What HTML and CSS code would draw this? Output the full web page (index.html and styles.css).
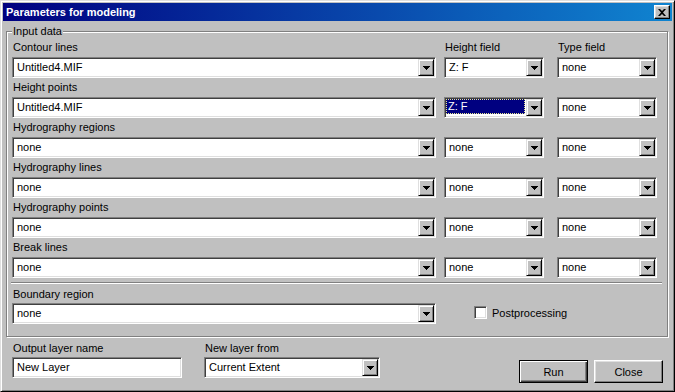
FILE: index.html
```html
<!DOCTYPE html>
<html lang="en">
<head>
    <meta charset="UTF-8">
    <title>Parameters for modeling</title>
    <link rel="stylesheet" href="styles.css">
</head>
<body>
    <div class="window">
        <div class="titlebar">
            <span class="title">Parameters for modeling</span>
            <span class="close-btn">
                <svg width="8" height="7" viewBox="0 0 8 7"><path d="M0 0h2l2 2 2-2h2L5 3.5 8 7H6L4 5 2 7H0l3-3.5z" fill="#000"/></svg>
            </span>
        </div>

        <fieldset class="group">
            <legend>Input data</legend>

            <div class="row">
                <div class="field f-main">
                    <div class="lbl">Contour lines</div>
                    <div class="combo"><span class="value">Untitled4.MIF</span><span class="drop"><svg width="7" height="4" viewBox="0 0 7 4"><path d="M0 0h7v1H0zM1 1h5v1H1zM2 2h3v1H2zM3 3h1v1H3z"/></svg></span></div>
                </div>
                <div class="field f-height">
                    <div class="lbl">Height field</div>
                    <div class="combo"><span class="value">Z: F</span><span class="drop"><svg width="7" height="4" viewBox="0 0 7 4"><path d="M0 0h7v1H0zM1 1h5v1H1zM2 2h3v1H2zM3 3h1v1H3z"/></svg></span></div>
                </div>
                <div class="field f-type">
                    <div class="lbl">Type field</div>
                    <div class="combo"><span class="value">none</span><span class="drop"><svg width="7" height="4" viewBox="0 0 7 4"><path d="M0 0h7v1H0zM1 1h5v1H1zM2 2h3v1H2zM3 3h1v1H3z"/></svg></span></div>
                </div>
            </div>

            <div class="row">
                <div class="field f-main">
                    <div class="lbl">Height points</div>
                    <div class="combo"><span class="value">Untitled4.MIF</span><span class="drop"><svg width="7" height="4" viewBox="0 0 7 4"><path d="M0 0h7v1H0zM1 1h5v1H1zM2 2h3v1H2zM3 3h1v1H3z"/></svg></span></div>
                </div>
                <div class="field f-height">
                    <div class="lbl"></div>
                    <div class="combo"><span class="value has-sel"><span class="sel">Z: F</span></span><span class="drop"><svg width="7" height="4" viewBox="0 0 7 4"><path d="M0 0h7v1H0zM1 1h5v1H1zM2 2h3v1H2zM3 3h1v1H3z"/></svg></span></div>
                </div>
                <div class="field f-type">
                    <div class="lbl"></div>
                    <div class="combo"><span class="value">none</span><span class="drop"><svg width="7" height="4" viewBox="0 0 7 4"><path d="M0 0h7v1H0zM1 1h5v1H1zM2 2h3v1H2zM3 3h1v1H3z"/></svg></span></div>
                </div>
            </div>

            <div class="row">
                <div class="field f-main">
                    <div class="lbl">Hydrography regions</div>
                    <div class="combo"><span class="value">none</span><span class="drop"><svg width="7" height="4" viewBox="0 0 7 4"><path d="M0 0h7v1H0zM1 1h5v1H1zM2 2h3v1H2zM3 3h1v1H3z"/></svg></span></div>
                </div>
                <div class="field f-height">
                    <div class="lbl"></div>
                    <div class="combo"><span class="value">none</span><span class="drop"><svg width="7" height="4" viewBox="0 0 7 4"><path d="M0 0h7v1H0zM1 1h5v1H1zM2 2h3v1H2zM3 3h1v1H3z"/></svg></span></div>
                </div>
                <div class="field f-type">
                    <div class="lbl"></div>
                    <div class="combo"><span class="value">none</span><span class="drop"><svg width="7" height="4" viewBox="0 0 7 4"><path d="M0 0h7v1H0zM1 1h5v1H1zM2 2h3v1H2zM3 3h1v1H3z"/></svg></span></div>
                </div>
            </div>

            <div class="row">
                <div class="field f-main">
                    <div class="lbl">Hydrography lines</div>
                    <div class="combo"><span class="value">none</span><span class="drop"><svg width="7" height="4" viewBox="0 0 7 4"><path d="M0 0h7v1H0zM1 1h5v1H1zM2 2h3v1H2zM3 3h1v1H3z"/></svg></span></div>
                </div>
                <div class="field f-height">
                    <div class="lbl"></div>
                    <div class="combo"><span class="value">none</span><span class="drop"><svg width="7" height="4" viewBox="0 0 7 4"><path d="M0 0h7v1H0zM1 1h5v1H1zM2 2h3v1H2zM3 3h1v1H3z"/></svg></span></div>
                </div>
                <div class="field f-type">
                    <div class="lbl"></div>
                    <div class="combo"><span class="value">none</span><span class="drop"><svg width="7" height="4" viewBox="0 0 7 4"><path d="M0 0h7v1H0zM1 1h5v1H1zM2 2h3v1H2zM3 3h1v1H3z"/></svg></span></div>
                </div>
            </div>

            <div class="row">
                <div class="field f-main">
                    <div class="lbl">Hydrography points</div>
                    <div class="combo"><span class="value">none</span><span class="drop"><svg width="7" height="4" viewBox="0 0 7 4"><path d="M0 0h7v1H0zM1 1h5v1H1zM2 2h3v1H2zM3 3h1v1H3z"/></svg></span></div>
                </div>
                <div class="field f-height">
                    <div class="lbl"></div>
                    <div class="combo"><span class="value">none</span><span class="drop"><svg width="7" height="4" viewBox="0 0 7 4"><path d="M0 0h7v1H0zM1 1h5v1H1zM2 2h3v1H2zM3 3h1v1H3z"/></svg></span></div>
                </div>
                <div class="field f-type">
                    <div class="lbl"></div>
                    <div class="combo"><span class="value">none</span><span class="drop"><svg width="7" height="4" viewBox="0 0 7 4"><path d="M0 0h7v1H0zM1 1h5v1H1zM2 2h3v1H2zM3 3h1v1H3z"/></svg></span></div>
                </div>
            </div>

            <div class="row">
                <div class="field f-main">
                    <div class="lbl">Break lines</div>
                    <div class="combo"><span class="value">none</span><span class="drop"><svg width="7" height="4" viewBox="0 0 7 4"><path d="M0 0h7v1H0zM1 1h5v1H1zM2 2h3v1H2zM3 3h1v1H3z"/></svg></span></div>
                </div>
                <div class="field f-height">
                    <div class="lbl"></div>
                    <div class="combo"><span class="value">none</span><span class="drop"><svg width="7" height="4" viewBox="0 0 7 4"><path d="M0 0h7v1H0zM1 1h5v1H1zM2 2h3v1H2zM3 3h1v1H3z"/></svg></span></div>
                </div>
                <div class="field f-type">
                    <div class="lbl"></div>
                    <div class="combo"><span class="value">none</span><span class="drop"><svg width="7" height="4" viewBox="0 0 7 4"><path d="M0 0h7v1H0zM1 1h5v1H1zM2 2h3v1H2zM3 3h1v1H3z"/></svg></span></div>
                </div>
            </div>

            <div class="sep"></div>

            <div class="boundary">
                <div class="field f-main">
                    <div class="lbl">Boundary region</div>
                    <div class="combo"><span class="value">none</span><span class="drop"><svg width="7" height="4" viewBox="0 0 7 4"><path d="M0 0h7v1H0zM1 1h5v1H1zM2 2h3v1H2zM3 3h1v1H3z"/></svg></span></div>
                </div>
                <div class="check">
                    <span class="box"></span>
                    <span class="check-text">Postprocessing</span>
                </div>
            </div>
        </fieldset>

        <div class="bottom">
            <div class="field f-output">
                <div class="lbl">Output layer name</div>
                <div class="combo"><span class="value">New Layer</span></div>
            </div>
            <div class="field f-from">
                <div class="lbl">New layer from</div>
                <div class="combo"><span class="value">Current Extent</span><span class="drop"><svg width="7" height="4" viewBox="0 0 7 4"><path d="M0 0h7v1H0zM1 1h5v1H1zM2 2h3v1H2zM3 3h1v1H3z"/></svg></span></div>
            </div>
            <div class="buttons">
                <button class="btn default">Run</button>
                <button class="btn">Close</button>
            </div>
        </div>
    </div>
</body>
</html>
```

FILE: styles.css
```css
* { box-sizing: border-box; }
html, body {
    margin: 0;
    padding: 0;
}
body {
    width: 675px;
    height: 392px;
    overflow: hidden;
    font-family: "Liberation Sans", Arial, sans-serif;
    font-size: 11px;
    color: #000;
    background: #c0c0c0;
}
.window {
    width: 675px;
    height: 392px;
    background: #c0c0c0;
    border: 1px solid;
    border-color: #dfdfdf #000 #000 #dfdfdf;
    box-shadow: inset 1px 1px 0 #fff, inset -1px -1px 0 #808080;
    padding: 2px;
    display: flex;
    flex-direction: column;
}
.titlebar {
    height: 18px;
    flex: none;
    display: flex;
    align-items: center;
    justify-content: space-between;
    padding: 0 2px 0 3px;
    background: linear-gradient(to right, #000080, #1084d0);
}
.title {
    color: #fff;
    font-weight: bold;
    font-size: 11px;
}
.close-btn {
    width: 16px;
    height: 14px;
    background: #c0c0c0;
    border: 1px solid;
    border-color: #fff #000 #000 #fff;
    box-shadow: inset -1px -1px 0 #808080, inset 1px 1px 0 #dfdfdf;
    display: flex;
    align-items: center;
    justify-content: center;
}

/* group box */
.group {
    margin: 4px 4px 0 3px;
    padding: 0 5px 12px;
    border: 1px solid #808080;
    box-shadow: inset 1px 1px 0 #fff, 1px 1px 0 #fff;
    min-width: 0;
}
.group legend {
    padding: 0 1px;
    line-height: 13px;
    background: #c0c0c0;
}
.row {
    display: flex;
    padding-top: 3px;
}
.field {
    display: flex;
    flex-direction: column;
}
.lbl {
    height: 13px;
    line-height: 13px;
    margin: 0 0 3px 1px;
    white-space: nowrap;
}
.f-main { width: 424px; }
.f-height { width: 100px; margin-left: 8px; }
.f-type { width: 100px; margin-left: 13px; }

/* combo / edit */
.combo {
    height: 21px;
    display: flex;
    background: #fff;
    border: 1px solid;
    border-color: #808080 #fff #fff #808080;
    box-shadow: inset 1px 1px 0 #404040, inset -1px -1px 0 #dfdfdf;
    padding: 1px;
}
.value {
    flex: 1;
    min-width: 0;
    line-height: 17px;
    padding-left: 3px;
    white-space: nowrap;
    overflow: hidden;
}
.value.has-sel { padding-left: 0; }
.sel {
    display: block;
    height: 15px;
    line-height: 13px;
    margin: 0 1px 2px 0;
    padding-left: 1px;
    background: #000080;
    color: #fff;
    border: 1px dotted #e8e890;
}
.drop {
    width: 16px;
    height: 17px;
    flex: none;
    background: #c0c0c0;
    border: 1px solid;
    border-color: #dfdfdf #000 #000 #dfdfdf;
    box-shadow: inset 1px 1px 0 #fff, inset -1px -1px 0 #808080;
    display: flex;
    align-items: center;
    justify-content: center;
}

.sep {
    margin: 4px 0 0 -1px;
    border-top: 1px solid #808080;
    border-bottom: 1px solid #fff;
}
.boundary {
    display: flex;
    padding-top: 4px;
}
.boundary .lbl { margin-bottom: 2px; }
.check {
    display: flex;
    align-items: center;
    align-self: flex-end;
    height: 21px;
    margin-left: 38px;
    padding-bottom: 2px;
}
.box {
    width: 13px;
    height: 13px;
    background: #fff;
    border: 1px solid;
    border-color: #808080 #fff #fff #808080;
    box-shadow: inset 1px 1px 0 #404040, inset -1px -1px 0 #dfdfdf;
}
.check-text { margin-left: 5px; }

/* bottom line */
.bottom {
    display: flex;
    align-items: flex-start;
    padding: 5px 9px 0 9px;
}
.bottom .lbl { margin-bottom: 2px; }
.f-output { width: 170px; }
.f-from { width: 176px; margin-left: 22px; }
.buttons {
    margin-left: auto;
    margin-top: 18px;
    display: flex;
    gap: 6px;
}
.btn {
    width: 69px;
    height: 23px;
    padding: 0;
    font-family: inherit;
    font-size: 11px;
    color: #000;
    background: #c0c0c0;
    border: 1px solid;
    border-color: #fff #000 #000 #fff;
    box-shadow: inset -1px -1px 0 #808080, inset 1px 1px 0 #dfdfdf;
}
.btn.default {
    border: 1px solid #000;
    box-shadow: inset 1px 1px 0 #fff, inset -1px -1px 0 #404040, inset -2px -2px 0 #808080;
}
```
